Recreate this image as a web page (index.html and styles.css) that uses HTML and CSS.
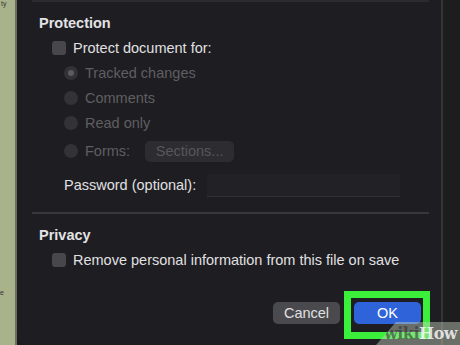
FILE: index.html
```html
<!DOCTYPE html>
<html>
<head>
    <title>Protect Document</title>
    <meta name="viewport" content="width=device-width, initial-scale=1.0">
    <link rel="stylesheet" href="styles.css">
</head>
<body>
    <div class="screen">
        <!-- Document behind the sheet -->
        <div class="doc-strip">
            <span class="doc-top">ty</span>
            <span class="doc-bottom">e</span>
        </div>

        <!-- Sheet dialog -->
        <div class="sheet">
            <div class="top-rule"></div>

            <h3 class="section-title">Protection</h3>
            <label class="check-row">
                <span class="checkbox"></span>
                Protect document for:
            </label>
            <div class="radio-group">
                <div class="radio-row"><span class="radio selected"></span>Tracked changes</div>
                <div class="radio-row"><span class="radio"></span>Comments</div>
                <div class="radio-row"><span class="radio"></span>Read only</div>
                <div class="radio-row forms-row">
                    <span class="radio"></span>Forms:
                    <span class="sections-btn">Sections...</span>
                </div>
            </div>
            <div class="password-row">
                <span>Password (optional):</span>
                <span class="password-field"></span>
            </div>

            <div class="separator"></div>

            <h3 class="section-title privacy">Privacy</h3>
            <label class="check-row">
                <span class="checkbox"></span>
                Remove personal information from this file on save
            </label>

            <div class="button-bar">
                <button class="btn btn-cancel">Cancel</button>
                <button class="btn btn-ok">OK</button>
            </div>

            <!-- highlight box over the OK button -->
            <div class="highlight"></div>
        </div>

        <div class="side-strip"></div>

        <div class="watermark"><b>wiki</b>How</div>
    </div>
</body>
</html>
```

FILE: styles.css
```css
:root {
    --sheet-bg: #1e1d21;
    --text: #e0e0e2;
    --dim: #5f5f62;
    --control: #48474b;
}

body {
    margin: 0;
    font-family: "Liberation Sans", Arial, sans-serif;
    background: #1c1c1e;
}

.screen {
    position: relative;
    display: flex;
    width: 460px;
    height: 345px;
    overflow: hidden;
}

.doc-strip {
    position: relative;
    width: 15px;
    background: #a8b38c;
    border-right: 2px solid #6b6f62;
    font-size: 7px;
    color: #333;
}

.doc-top {
    position: absolute;
    top: 0;
    left: 1px;
}

.doc-bottom {
    position: absolute;
    top: 289px;
    left: 0;
}

.sheet {
    position: relative;
    flex: 1;
    background: var(--sheet-bg);
    border-right: 2px solid #353437;
    border-bottom-left-radius: 10px;
    padding: 0 0 0 22px;
    color: var(--text);
    font-size: 14.5px;
}

.top-rule {
    height: 2px;
    margin: 0 12px 0 -7px;
    background: #2b2a2e;
}

.section-title {
    margin: 12px 0 0;
    font-size: 14.5px;
    line-height: 18px;
    font-weight: bold;
    color: #e3e3e5;
}

.check-row {
    display: flex;
    align-items: center;
    gap: 7px;
    height: 18px;
    margin: 7px 0 0 13px;
}

.checkbox {
    width: 14px;
    height: 14px;
    border-radius: 3px;
    background: var(--control);
}

.radio-group {
    margin-left: 25px;
    color: var(--dim);
}

.radio-row {
    display: flex;
    align-items: center;
    gap: 7px;
    height: 18px;
    margin-top: 7px;
}

.radio {
    position: relative;
    width: 14px;
    height: 14px;
    border-radius: 50%;
    background: #333236;
}

.radio.selected::after {
    content: "";
    position: absolute;
    left: 4px;
    top: 4px;
    width: 6px;
    height: 6px;
    border-radius: 50%;
    background: #5c5b5f;
}

.forms-row {
    height: 24px;
}

.sections-btn {
    margin-left: 8px;
    width: 89px;
    height: 21px;
    line-height: 21px;
    text-align: center;
    border-radius: 5px;
    background: #2d2c30;
    color: #58575b;
}

.password-row {
    display: flex;
    align-items: center;
    gap: 11px;
    height: 24px;
    margin: 10px 0 0 25px;
}

.password-field {
    width: 193px;
    height: 22px;
    background: #222125;
    border-bottom: 1px solid #333236;
}

.separator {
    height: 2px;
    margin: 15px 12px 0 -7px;
    background: #38373b;
}

.privacy {
    margin-top: 12px;
}

.button-bar {
    display: flex;
    justify-content: flex-end;
    gap: 14px;
    margin: 33px 20px 0 0;
}

.btn {
    height: 22px;
    width: 67px;
    border: none;
    border-radius: 5px;
    font-family: inherit;
    font-size: 14.5px;
    color: #e0e0e2;
    padding: 0;
}

.btn-cancel {
    background: #4a494d;
}

.btn-ok {
    background: #2f63d9;
    color: #fff;
}

.highlight {
    position: absolute;
    left: 327px;
    top: 291px;
    width: 72px;
    height: 34px;
    border: 7px solid #3af03a;
}

.side-strip {
    width: 17px;
    background: #1d1d1f;
}

.watermark {
    position: absolute;
    right: 0;
    bottom: 0;
    width: 84px;
    height: 23px;
    padding-left: 8px;
    background: rgba(200, 210, 190, 0.45);
    clip-path: polygon(20px 0, 100% 0, 100% 100%, 0 100%);
    font-family: "DejaVu Serif", serif;
    font-size: 16px;
    font-weight: bold;
    letter-spacing: -0.5px;
    line-height: 24px;
    color: rgba(255, 255, 255, 0.8);
    box-sizing: border-box;
}

.watermark b {
    color: rgba(40, 40, 40, 0.55);
}
```
